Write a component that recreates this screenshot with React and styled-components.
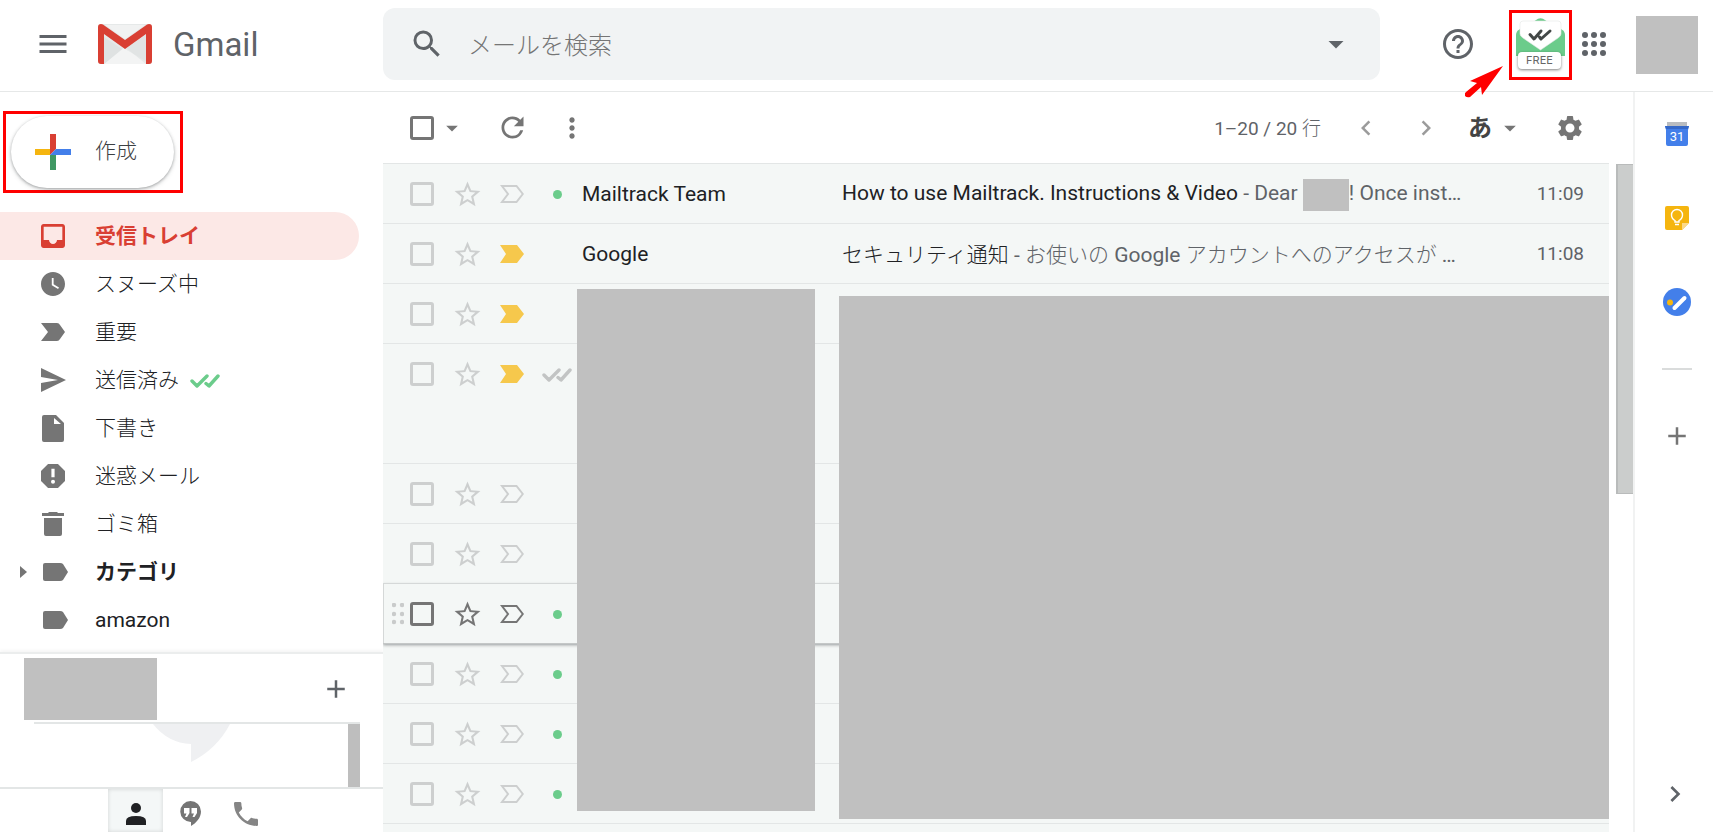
import React from 'react'
import styled, { createGlobalStyle, css } from 'styled-components'
import {
	MdAdd, MdArrowDropDown, MdChevronLeft, MdChevronRight, MdHelpOutline, MdMenu,
	MdMoreVert, MdPhone, MdRefresh, MdSearch, MdSettings, MdStarBorder
} from 'react-icons/md'

const folders = [
	{ name: '受信トレイ', icon: 'inbox', active: true },
	{ name: 'スヌーズ中', icon: 'clock' },
	{ name: '重要', icon: 'important' },
	{ name: '送信済み', icon: 'send', tracked: true },
	{ name: '下書き', icon: 'draft' },
	{ name: '迷惑メール', icon: 'spam' },
	{ name: 'ゴミ箱', icon: 'trash' },
	{ name: 'カテゴリ', icon: 'label', bold: true, expandable: true },
	{ name: 'amazon', icon: 'label', latin: true },
]

const mails = [
	{
		id: 1, status: 'dot', sender: 'Mailtrack Team', time: '11:09',
		subject: 'How to use Mailtrack. Instructions & Video',
		snippet: <>Dear <HiddenName />! Once inst…</>,
	},
	{
		id: 2, important: true, sender: 'Google', time: '11:08',
		subject: <Jp>セキュリティ通知</Jp>,
		snippet: <><Jp>お使いの</Jp> Google <Jp>アカウントへのアクセスが</Jp> …</>,
	},
	{ id: 3, important: true },
	{ id: 4, important: true, status: 'checks', tall: true },
	{ id: 5 },
	{ id: 6 },
	{ id: 7, status: 'dot', hovered: true },
	{ id: 8, status: 'dot' },
	{ id: 9, status: 'dot' },
	{ id: 10, status: 'dot' },
	{ id: 11 },
]

// width, height, viewBox, path
const icons = {
	inbox: [24, 24, '3 3 18 18', 'M19 3H5C3.9 3 3 3.9 3 5v14c0 1.1.9 2 2 2h14c1.1 0 2-.9 2-2V5c0-1.1-.9-2-2-2zm0 12h-4c0 1.66-1.35 3-3 3s-3-1.34-3-3H5V5h14v10z'],
	clock: [24, 24, '2 2 20 20', 'M12 2C6.5 2 2 6.5 2 12s4.5 10 10 10 10-4.5 10-10S17.5 2 12 2zm4.2 14.2L11 13V7h1.5v5.2l4.5 2.7-.8 1.3z'],
	important: [24, 18, '0 0 24 18', 'M0 0H16Q18 0 19 2L24 9L19 16Q18 18 16 18H0L7 9z'],
	send: [25, 24, '0 0 25 24', 'M0 0L25 12L0 24V15L17 12L0 9z'],
	draft: [22, 27, '0 0 22 27', 'M2 0H14L22 8V25a2 2 0 0 1-2 2H2a2 2 0 0 1-2-2V2a2 2 0 0 1 2-2zM12 3V9H19z'],
	spam: [24, 24, '3 3 18 18', 'M15.73 3H8.27L3 8.27v7.46L8.27 21h7.46L21 15.73V8.27L15.73 3zM12 17.8a1.5 1.5 0 1 1 0-3 1.5 1.5 0 0 1 0 3zm1.2-4.8h-2.4V6.5h2.4V13z'],
	trash: [22, 24, '0 0 22 24', 'M7 0H15L16 1H22V4H0V1H6zM2 6H20V22a2 2 0 0 1-2 2H4a2 2 0 0 1-2-2z'],
	label: [30, 18, '-5 0 30 18', 'M2 0H17Q19 0 20 1L25 9L20 17Q19 18 17 18H2a2 2 0 0 1-2-2V2a2 2 0 0 1 2-2z'],
}

function Icon({ name }) {
	const [width, height, viewBox, d] = icons[name]
	return <svg width={width} height={height} viewBox={viewBox} fill="currentColor" fillRule="evenodd"><path d={d} /></svg>
}

function DoubleCheck({ color, width = 30 }) {
	return <svg width={width} height={width / 2} viewBox="0 0 30 15" fill="none" stroke={color} strokeWidth="3.4" strokeLinecap="round" strokeLinejoin="round">
		<path d="M2 8L7 13L17 3M16 10.500L19 13L28 3" />
	</svg>
}

function ImportantMark({ on }) {
	return <svg width="24" height="18" viewBox="0 0 24 18">
		{on
			? <path d="M0 0H17L24 9L17 18H0L6 9z" fill="#f6c84c" />
			: <path d="M2 1H16.500L22.800 9L16.500 17H2L8 9z" fill="none" stroke="currentColor" strokeWidth="2" />}
	</svg>
}

function HiddenName() {
	return <NameBlock />
}

function Jp({ children }) {
	return <JpText lang="ja">{children}</JpText>
}

// --------------------------------------------------------
function GmailLogo() {
	return <svg width="54" height="40" viewBox="0 0 54 40">
		<rect width="54" height="40" rx="3" fill="#e6e9e9" />
		<path d="M6 40L27 23L48 40z" fill="#f3f4f4" />
		<path d="M6 13V40L24 25z" fill="#dfe2e2" />
		<path d="M7 1H47L27 15z" fill="#f1f2f2" />
		<path d="M48 11L27 25L53 40L48 40z" fill="#dcdfdf" opacity=".5" />
		<path d="M0 3Q0 0 3 0Q5 0 7 2L27 16L47 2Q49 0 51 0Q54 0 54 3V37Q54 40 51 40H48V10L27 25L6 10V40H3Q0 40 0 37z" fill="#d93f33" />
	</svg>
}

function Header() {
	return <TopBar>
		<Brand>
			<IconButton $size={36} aria-label="メインメニュー"><MdMenu size={36} /></IconButton>
			<BrandLink href="#" aria-label="Gmail">
				<GmailLogo />
				<BrandName>Gmail</BrandName>
			</BrandLink>
		</Brand>
		<SearchBox role="search">
			<IconButton $size={36} aria-label="検索"><MdSearch size={36} /></IconButton>
			<SearchInput type="text" placeholder="メールを検索" aria-label="メールを検索" />
			<IconButton $size={36} aria-label="検索オプション"><MdArrowDropDown size={36} /></IconButton>
		</SearchBox>
		<HeaderActions>
			<IconButton $size={36} aria-label="ヘルプ"><MdHelpOutline size={36} /></IconButton>
			<TrackerSlot>
				<Callout>
					<TrackerButton>
						<svg width="50" height="42" viewBox="0 0 50 42">
							<path d="M17 4L22 .800Q24.500 -.500 27 .800L32 4z" fill="#6bcc8b" />
							<path d="M0 17Q0 13 4 11H45Q49 13 49 17V38H0z" fill="#6bcc8b" />
							<path d="M7 3H42Q45 3 45 6V16Q45 18 42 20L24.500 32L7 20Q4 18 4 16V6Q4 3 7 3z" fill="#fff" stroke="#e4e8e6" strokeWidth=".6" />
							<path d="M14 16.500L18 21L25 13M23.500 19L25 21L34 13" fill="none" stroke="#434847" strokeWidth="3" strokeLinecap="round" strokeLinejoin="round" />
						</svg>
						<PlanBadge>FREE</PlanBadge>
					</TrackerButton>
				</Callout>
				<Pointer width="38" height="34" viewBox="0 0 38 34">
					<path d="M38 0L17 29L16 21L5 31Q2 32 0 30Q-1 28 1 26L12 17L5 15z" fill="#f00" />
				</Pointer>
			</TrackerSlot>
			<AppsButton $size={24} aria-label="Google アプリ">
				<svg width="24" height="24" viewBox="0 0 24 24" fill="currentColor">
					{[3, 12, 21].map( y => [3, 12, 21].map( x => <circle key={x + '-' + y} cx={x} cy={y} r="3" /> ) )}
				</svg>
			</AppsButton>
			<Avatar />
		</HeaderActions>
	</TopBar>
}

// --------------------------------------------------------
function Sidebar() {
	return <Side>
		<ComposeSlot>
			<Callout>
				<ComposeButton>
					<svg width="36" height="36" viewBox="0 0 36 36">
						<path d="M15 0H21V15L15 21z" fill="#d93f33" />
						<path d="M21 15H36V21H15z" fill="#437fea" />
						<path d="M15 21H21V36H15z" fill="#3f9863" />
						<path d="M0 15H15V21H0z" fill="#f5b50f" />
					</svg>
					<SideText><Jp>作成</Jp></SideText>
				</ComposeButton>
			</Callout>
		</ComposeSlot>
		<nav>
			{folders.map( f =>
				<FolderLink key={f.name} href="#" $active={f.active} $bold={f.bold} $latin={f.latin}>
					<Expander>
						{f.expandable && <svg width="7" height="12" viewBox="0 0 7 12"><path d="M0 0L7 6L0 12z" fill="#757575" /></svg>}
					</Expander>
					<FolderIcon $active={f.active}><Icon name={f.icon} /></FolderIcon>
					<SideText $latin={f.latin}>{f.name}</SideText>
					{f.tracked && <DoubleCheck color="#6bcc8b" />}
				</FolderLink>
			)}
		</nav>
		<Chat>
			<ChatHeader>
				<ChatUser />
				<IconButton $size={36} aria-label="新しい会話"><MdAdd size={30} /></IconButton>
			</ChatHeader>
			<ChatBody>
				<ChatEmpty>
					<svg width="77" height="38" viewBox="0 0 77 38"><path d="M0 0H77Q64 25 38 38V20Q15 19 0 0z" fill="#eff0f2" /></svg>
				</ChatEmpty>
				<ChatScroll />
			</ChatBody>
			<ChatTabs>
				<ChatTab $active aria-label="連絡先">
					<svg width="20" height="22" viewBox="0 0 20 22" fill="#202124">
						<circle cx="10" cy="5" r="5" />
						<path d="M0 22V18Q0 13 10 13T20 18V22z" />
					</svg>
				</ChatTab>
				<ChatTab aria-label="ハングアウト">
					<svg width="21" height="25" viewBox="0 0 21 25">
						<path d="M10.500 0A10.500 10.500 0 0 1 21 10.500C21 17 16 22 11 25V21A10.500 10.500 0 0 1 10.500 0z" fill="#757575" />
						<path d="M4 7H9.500V12L7 16H5L6.500 12.500H4zM11.500 7H17V12L14.500 16H12.500L14 12.500H11.500z" fill="#fff" />
					</svg>
				</ChatTab>
				<ChatTab aria-label="電話"><MdPhone size={32} color="#858585" /></ChatTab>
			</ChatTabs>
		</Chat>
	</Side>
}

// --------------------------------------------------------
function Toolbar() {
	return <Tools>
		<Check $dark type="checkbox" aria-label="すべて選択" />
		<SelectMenu aria-label="選択"><MdArrowDropDown size={28} /></SelectMenu>
		<ToolButton aria-label="更新"><MdRefresh size={33} /></ToolButton>
		<ToolButton aria-label="その他"><MdMoreVert size={32} /></ToolButton>
		<Pager>1–20 / 20 <Jp>行</Jp></Pager>
		<ToolButton $faint aria-label="前へ"><MdChevronLeft size={30} /></ToolButton>
		<ToolButton $faint aria-label="次へ"><MdChevronRight size={30} /></ToolButton>
		<InputTool aria-label="入力ツール">あ<MdArrowDropDown size={28} color="#757575" /></InputTool>
		<ToolButton aria-label="設定"><MdSettings size={30} /></ToolButton>
	</Tools>
}

function MailRow({ mail }) {
	return <Row $tall={mail.tall} $hovered={mail.hovered}>
		<DragCell>
			{mail.hovered && <svg width="12" height="22" viewBox="0 0 12 22" fill="#c9cbcb">
				{[2, 11, 19].map( y => [2, 10].map( x => <circle key={x + '-' + y} cx={x} cy={y} r="2.200" /> ) )}
			</svg>}
		</DragCell>
		<CheckCell><Check $dark={mail.hovered} type="checkbox" aria-label={'メール ' + mail.id} /></CheckCell>
		<MarkButton aria-label="スター"><MdStarBorder size={31} /></MarkButton>
		<MarkButton aria-label="重要"><ImportantMark on={mail.important} /></MarkButton>
		<StatusCell>
			{mail.status === 'dot' && <Dot />}
			{mail.status === 'checks' && <DoubleCheck color="#c2c4c4" />}
		</StatusCell>
		<Sender>{mail.sender}</Sender>
		<Subject>
			{mail.subject}
			{mail.snippet && <Snippet> - {mail.snippet}</Snippet>}
		</Subject>
		<Time>{mail.time}</Time>
	</Row>
}

function SidePanel() {
	return <Rail>
		<RailButton aria-label="カレンダー">
			<svg width="24" height="24" viewBox="0 0 24 24">
				<path d="M2 0H22V5H2z" fill="#b9bcc0" />
				<path d="M0 4H24L23 8V22Q23 24 21 24H3Q1 24 1 22V8z" fill="#437fea" />
				<path d="M0 4H24L23 7H1z" fill="#3568c8" />
				<text x="12" y="19" textAnchor="middle" fontFamily="Roboto, sans-serif" fontSize="13" fill="#fff">31</text>
			</svg>
		</RailButton>
		<RailButton aria-label="Keep">
			<svg width="24" height="24" viewBox="0 0 24 24">
				<path d="M2 0H22Q24 0 24 2V17L17 24H2Q0 24 0 22V2Q0 0 2 0z" fill="#f5b50f" />
				<path d="M17 24V17H24z" fill="#fbd98a" />
				<path d="M10 16V14.500Q6.500 12.500 6.500 9A5.500 5.500 0 0 1 17.500 9Q17.500 12.500 14 14.500V16zM10 18.500H14" fill="none" stroke="#fff" strokeWidth="1.400" />
			</svg>
		</RailButton>
		<RailButton aria-label="ToDo リスト">
			<svg width="28" height="28" viewBox="0 0 28 28">
				<circle cx="14" cy="14" r="14" fill="#437fea" />
				<circle cx="7" cy="14.500" r="3" fill="#f5b50f" />
				<path d="M11.500 20L21.500 10" stroke="#fff" strokeWidth="4" strokeLinecap="round" />
			</svg>
		</RailButton>
		<RailLine />
		<RailButton aria-label="アドオンを取得"><MdAdd size={30} /></RailButton>
		<RailToggle aria-label="サイドパネルを非表示"><MdChevronRight size={32} /></RailToggle>
	</Rail>
}

export default function App() {
	return <Page>
		<GlobalStyle />
		<Header />
		<Body>
			<Sidebar />
			<Main>
				<Toolbar />
				<ListArea>
					<MailList>
						{mails.map( m => <MailRow key={m.id} mail={m} /> )}
						<SenderCover />
						<SubjectCover />
					</MailList>
					<ScrollThumb />
				</ListArea>
			</Main>
			<SidePanel />
		</Body>
	</Page>
}

// --------------------------------------------------------
const GlobalStyle = createGlobalStyle`
	* { box-sizing: border-box; }
	body {
		margin: 0;
		background: #fff;
		color: #202124;
		font: 21px/24px Roboto, "Noto Sans CJK JP", sans-serif;
	}
	button {
		border: 0;
		padding: 0;
		background: none;
		font: inherit;
		cursor: pointer;
	}
	a { color: inherit; text-decoration: none; }
	svg { display: block; flex: none; }
`
// --------------------------------------------------------
const Page = styled.div`
	display: flex;
	flex-direction: column;
	height: 100vh;
	overflow: hidden;
`
const Body = styled.div`
	display: flex;
	flex: 1;
	min-height: 0;
`
const JpText = styled.span`
	font-family: "Noto Sans CJK JP", sans-serif;
	font-weight: 300;
`
const Callout = styled.div`
	display: flex;
	border: 3px solid #f00;
`
const IconButton = styled.button`
	display: flex;
	align-items: center;
	justify-content: center;
	flex: none;
	width: ${props => props.$size}px;
	height: ${props => props.$size}px;
	color: #5f6368;
`
// --------------------------------------------------------
const TopBar = styled.header`
	display: flex;
	flex: none;
	align-items: center;
	height: 92px;
	padding-bottom: 3px;
	border-bottom: 1px solid #e6e8e8;
`
const Brand = styled.div`
	display: flex;
	align-items: center;
	flex: none;
	gap: 27px;
	width: 383px;
	padding-left: 35px;
`
const BrandLink = styled.a`
	display: flex;
	align-items: center;
	gap: 21px;
`
const BrandName = styled.span`
	padding-top: 2px;
	color: #5f6368;
	font-size: 33px;
	line-height: 40px;
`
const SearchBox = styled.div`
	display: flex;
	align-items: center;
	flex: 1;
	height: 72px;
	padding: 0 26px;
	border-radius: 12px;
	background: #f1f3f4;
`
const SearchInput = styled.input`
	flex: 1;
	min-width: 0;
	margin-left: 23px;
	padding: 0;
	border: 0;
	outline: 0;
	background: none;
	color: #202124;
	font: 300 24px/36px "Noto Sans CJK JP", sans-serif;
	&::placeholder {
		color: #757575;
		opacity: 1;
	}
`
const HeaderActions = styled.div`
	display: flex;
	align-items: center;
	justify-content: flex-end;
	flex: none;
	width: 333px;
	padding-right: 15px;
`
const TrackerSlot = styled.div`
	position: relative;
	margin-top: 2px;
	margin-left: 33px;
`
const TrackerButton = styled.button`
	position: relative;
	width: 57px;
	height: 64px;
	padding: 5px 0 0 4px;
	display: flex;
`
const PlanBadge = styled.span`
	position: absolute;
	left: 6px;
	bottom: 8px;
	width: 43px;
	border-radius: 4px;
	background: #fff;
	box-shadow: 0 1px 3px rgba(0, 0, 0, 0.5);
	color: #666;
	font-family: Inter, sans-serif;
	font-size: 11px;
	line-height: 17px;
	text-align: center;
`
const Pointer = styled.svg`
	position: absolute;
	right: 69px;
	top: 56px;
`
const AppsButton = styled(IconButton)`
	margin-left: 10px;
`
const Avatar = styled.div`
	width: 62px;
	height: 58px;
	margin-top: 2px;
	margin-left: 30px;
	background: #c0c0c0;
`
// --------------------------------------------------------
const Side = styled.aside`
	display: flex;
	flex-direction: column;
	flex: none;
	width: 383px;
`
const ComposeSlot = styled.div`
	display: flex;
	padding: 19px 3px;
`
const ComposeButton = styled.button`
	display: flex;
	align-items: center;
	gap: 24px;
	height: 72px;
	margin: 2px 6px 2px 5px;
	padding: 0 37px 0 24px;
	border-radius: 36px;
	background: #fff;
	box-shadow: 0 1px 3px rgba(60, 64, 67, 0.4), 0 2px 5px rgba(60, 64, 67, 0.15);
	color: #3c4043;
`
const SideText = styled.span`
	padding-bottom: ${props => props.$latin ? 0 : 4}px;
`
const FolderLink = styled.a`
	display: flex;
	align-items: center;
	height: 48px;
	margin-right: 24px;
	border-radius: 0 24px 24px 0;
	font-family: "Noto Sans CJK JP", sans-serif;
	font-weight: 300;
	& > span + svg {
		margin-left: 11px;
	}
	${props => props.$latin && css`
		font-family: Roboto, sans-serif;
		font-weight: 400;
	`}
	${props => props.$bold && css`
		font-weight: 700;
	`}
	${props => props.$active && css`
		background: #fce8e6;
		color: #d93f33;
		font-weight: 700;
	`}
`
const Expander = styled.span`
	display: flex;
	justify-content: flex-end;
	width: 35px;
	padding-right: 8px;
`
const FolderIcon = styled.span`
	display: flex;
	justify-content: center;
	width: 36px;
	margin-right: 24px;
	color: ${props => props.$active ? '#d93f33' : '#757575'};
`
// --------------------------------------------------------
const Chat = styled.section`
	margin-top: auto;
	border-top: 2px solid #ebeded;
	background: #fff;
	box-shadow: 0 -2px 3px rgba(0, 0, 0, 0.04);
`
const ChatHeader = styled.div`
	display: flex;
	align-items: center;
	justify-content: space-between;
	height: 68px;
	padding: 2px 29px 0 24px;
`
const ChatUser = styled.div`
	width: 133px;
	height: 62px;
	background: #c0c0c0;
`
const ChatBody = styled.div`
	display: flex;
	justify-content: space-between;
	height: 65px;
	margin: 0 23px 0 34px;
	border-top: 2px solid #e3e6e6;
`
const ChatEmpty = styled.div`
	display: flex;
	flex: 1;
	justify-content: center;
`
const ChatScroll = styled.div`
	width: 12px;
	background: #bebebe;
`
const ChatTabs = styled.div`
	display: flex;
	padding-left: 108px;
	border-top: 2px solid #e3e6e6;
`
const ChatTab = styled.button`
	display: flex;
	align-items: center;
	justify-content: center;
	width: 55px;
	height: 43px;
	padding-top: 6px;
	${props => props.$active && css`
		background: #f4f7f7;
		box-shadow: inset 0 0 4px rgba(0, 0, 0, 0.14);
	`}
`
// --------------------------------------------------------
const Main = styled.main`
	display: flex;
	flex-direction: column;
	flex: 1;
	min-width: 0;
`
const Tools = styled.div`
	display: flex;
	align-items: center;
	flex: none;
	height: 71px;
	padding: 0 33px 0 27px;
`
const Check = styled.input`
	appearance: none;
	flex: none;
	width: 24px;
	height: 24px;
	margin: 0;
	border: 3px solid ${props => props.$dark ? '#757575' : '#cdcfcf'};
	border-radius: 3px;
`
const ToolButton = styled.button`
	display: flex;
	align-items: center;
	justify-content: center;
	flex: none;
	width: 60px;
	height: 60px;
	color: ${props => props.$faint ? '#9b9b9b' : '#757575'};
`
const SelectMenu = styled(ToolButton)`
	width: 36px;
	margin-right: 12px;
`
const Pager = styled.span`
	margin-left: auto;
	margin-right: 15px;
	color: #5f6368;
	font-size: 19px;
	white-space: nowrap;
`
const InputTool = styled(ToolButton)`
	gap: 4px;
	width: 84px;
	padding-right: 4px;
	color: #444;
	font-size: 24px;
	font-weight: 700;
`
// --------------------------------------------------------
const ListArea = styled.div`
	display: flex;
	flex: 1;
	align-items: flex-start;
	gap: 7px;
	min-height: 0;
`
const MailList = styled.ul`
	position: relative;
	flex: 1;
	min-width: 0;
	height: 100%;
	margin: 0;
	padding: 0;
	overflow: hidden;
	border-top: 1px solid #e3e6e6;
	background: #f4f7f6;
	list-style: none;
`
const ScrollThumb = styled.div`
	width: 17px;
	height: 330px;
	margin-top: 1px;
	border: 1px solid #b9bbbb;
	border-width: 1px 0 1px 2px;
	background: #cbcdcc;
`
const Row = styled.li`
	display: grid;
	grid-template-columns: 27px 36px 42px 48px 42px 259px 1fr auto;
	grid-template-rows: 60px;
	align-items: center;
	height: ${props => props.$tall ? 120 : 60}px;
	border-bottom: 1px solid #e3e6e6;
	color: #cdcfcf;
	${props => props.$hovered && css`
		color: #757575;
		box-shadow: inset 1px 0 0 #d5d8d8, 0 -1px 0 #d5d8d8, 0 1px 3px rgba(60, 64, 67, 0.5);
		border-bottom-color: #c4c7c7;
	`}
`
const DragCell = styled.span`
	padding-left: 9px;
`
const CheckCell = styled.span`
	display: flex;
`
const MarkButton = styled.button`
	display: flex;
	justify-content: center;
	color: inherit;
`
const StatusCell = styled.span`
	display: flex;
	justify-content: center;
`
const Dot = styled.i`
	width: 9px;
	height: 9px;
	border-radius: 50%;
	background: #6bcc8b;
`
const Sender = styled.span`
	padding-left: 4px;
	color: #202124;
`
const Subject = styled.span`
	padding-left: 5px;
	color: #202124;
	line-height: 32px;
	white-space: nowrap;
`
const Snippet = styled.span`
	color: #5f6368;
`
const NameBlock = styled.span`
	display: inline-block;
	width: 46px;
	height: 32px;
	background: #c0c0c0;
	vertical-align: middle;
`
const Time = styled.time`
	padding: 0 25px;
	color: #5f6368;
	font-size: 19px;
`
// blocks that hide the private part of the list
const SenderCover = styled.li`
	position: absolute;
	left: 194px;
	top: 125px;
	width: 238px;
	height: 522px;
	background: #c0c0c0;
`
const SubjectCover = styled.li`
	position: absolute;
	left: 456px;
	right: 0;
	top: 132px;
	height: 523px;
	background: #c0c0c0;
`
// --------------------------------------------------------
const Rail = styled.aside`
	display: flex;
	flex-direction: column;
	align-items: center;
	flex: none;
	width: 80px;
	padding-left: 6px;
	border-left: 2px solid #f1f2f2;
`
const RailButton = styled.button`
	display: flex;
	align-items: center;
	justify-content: center;
	width: 48px;
	height: 84px;
	color: #757575;
`
const RailLine = styled.hr`
	width: 30px;
	margin: 24px 0;
	border: 0;
	border-top: 2px solid #dadcdc;
`
const RailToggle = styled(RailButton)`
	height: 76px;
	margin-top: auto;
	margin-right: 4px;
	color: #5f6368;
`
// --------------------------------------------------------
